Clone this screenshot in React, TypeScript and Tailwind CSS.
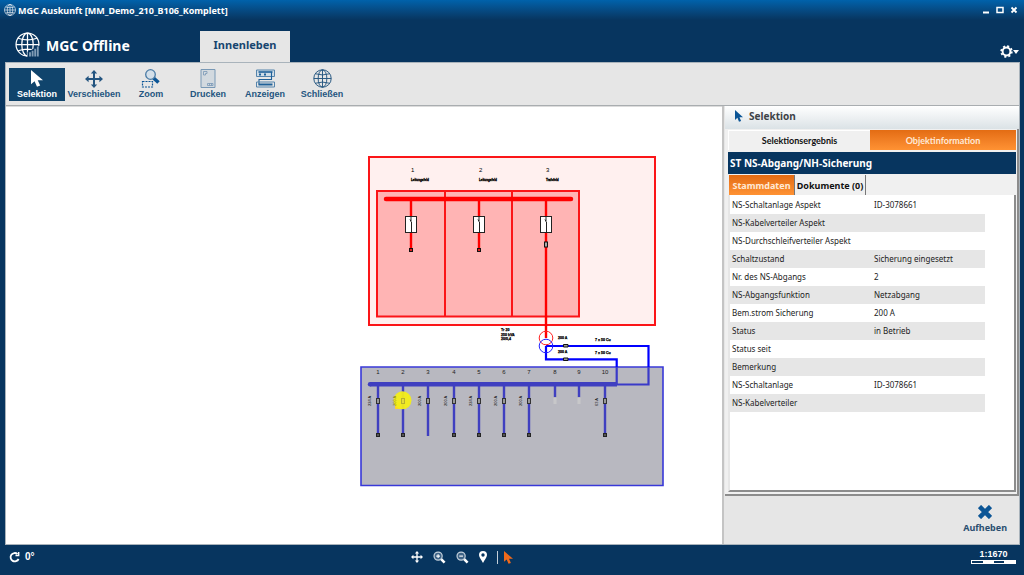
import type { ReactNode } from "react";

const NAVY = "#07355f";
const BLUE = "#0b5596";

function Globe({ size, bars = false }: { size: number; bars?: boolean }) {
  return (
    <svg width={size} height={size} viewBox="0 0 24 24" fill="none" stroke="currentColor" strokeWidth="1.2">
      <circle cx="12" cy="12" r="11" />
      <ellipse cx="12" cy="12" rx="5.5" ry="11" />
      <path d="M12 1v22M1 12h22M3 6q9 3 18 0M3 18q9-3 18 0" />
      {bars && (
        <g stroke="none">
          <path d="M12 24v-5l12-6v11z" fill={NAVY} />
          <path d="M13.500 23.500v-4h1.800v4zM16 23.500v-5.500h1.800v5.500zM18.500 23.500v-7.500h1.800v7.500zM21 23.500v-9.500h1.800v9.500z" fill="#7f9bb5" />
        </g>
      )}
    </svg>
  );
}

function Cursor({ width, height }: { width: number; height: number }) {
  return (
    <svg width={width} height={height} viewBox="0 0 12 18" preserveAspectRatio="none" fill="currentColor">
      <path d="M0 0v15l3.600-3.200L6 17.800l3.200-1.300-2.500-5.700H12z" />
    </svg>
  );
}

function Move({ size }: { size: number }) {
  return (
    <svg width={size} height={size} viewBox="0 0 18 18" fill="currentColor">
      <path d="M9 0l3.200 3.600H10V8h4.400V5.800L18 9l-3.600 3.200V10H10v4.400h2.200L9 18l-3.200-3.600H8V10H3.600v2.200L0 9l3.600-3.200V8H8V3.600H5.800z" />
    </svg>
  );
}

function ZoomSelect() {
  return (
    <svg width="20" height="19" viewBox="0 0 20 19" fill="none">
      <path d="M12.500 9l5 4.500" stroke={BLUE} strokeWidth="3.600" />
      <circle cx="9.500" cy="5.500" r="4.800" fill="#d3dfe9" stroke="#4a7ba5" strokeWidth="1.300" />
      <path d="M1.500 12.500h10v5.500h-10z" stroke={BLUE} strokeWidth="1.200" strokeDasharray="2 1" />
    </svg>
  );
}

function PrintSheet() {
  return (
    <svg width="16" height="19" viewBox="0 0 16 19" fill="none" stroke="#7898b5">
      <path d="M1 .5h14v18H1z" fill="#d2d9df" />
      <path d="M3.500 6V2.500H7v2H5.500V6zM7.500 16.500v-2H13v2zM9.500 14.500v2M11.500 14.500v2" strokeWidth="0.800" />
    </svg>
  );
}

function Displays() {
  return (
    <svg width="19" height="19" viewBox="0 0 19 19" fill="none" stroke="#1f6199">
      <path d="M.5 1h18v6.500H.5z" fill="#cfdce6" stroke="#5584ac" />
      <path d="M2.500 3h14" strokeWidth="1.600" />
      <path d="M3 5.500h2M8 5.500h2" strokeWidth="2" />
      <path d="M15.500 3v7.500H3v5" strokeWidth="1.100" />
      <path d="M.5 13h18v5H.5z" stroke="#5584ac" />
      <path d="M2.500 15.500h14" strokeWidth="2" />
    </svg>
  );
}

function Magnifier({ plus = false }: { plus?: boolean }) {
  return (
    <svg width="13" height="13" viewBox="0 0 14 14" fill="none">
      <path d="M8.500 8.500l4 4" stroke="#fff" strokeWidth="2.800" />
      <circle cx="5.500" cy="5.500" r="4.400" fill="#3f6487" stroke="#c3d0db" strokeWidth="1.300" />
      <path d={plus ? "M3.500 5.500h4M5.500 3.500v4" : "M3.500 5.500h4"} stroke="#fff" strokeWidth="1.200" />
    </svg>
  );
}

const tools: { label: string; icon: ReactNode }[] = [
  { label: "Selektion", icon: <Cursor width={12} height={17} /> },
  { label: "Verschieben", icon: <Move size={18} /> },
  { label: "Zoom", icon: <ZoomSelect /> },
  { label: "Drucken", icon: <PrintSheet /> },
  { label: "Anzeigen", icon: <Displays /> },
  { label: "Schließen", icon: <Globe size={19} /> },
];

const rows = [
  ["NS-Schaltanlage Aspekt", "ID-3078661"],
  ["NS-Kabelverteiler Aspekt", ""],
  ["NS-Durchschleifverteiler Aspekt", ""],
  ["Schaltzustand", "Sicherung eingesetzt"],
  ["Nr. des NS-Abgangs", "2"],
  ["NS-Abgangsfunktion", "Netzabgang"],
  ["Bem.strom Sicherung", "200 A"],
  ["Status", "in Betrieb"],
  ["Status seit", ""],
  ["Bemerkung", ""],
  ["NS-Schaltanlage", "ID-3078661"],
  ["NS-Kabelverteiler", ""],
];

const fields = [
  { x: 411, name: "Leitungsfeld" },
  { x: 479, name: "Leitungsfeld" },
  { x: 546, name: "Trafofeld" },
];

const feeders = [
  { x: 378, fuse: "224 A" },
  { x: 403, fuse: "200 A" },
  { x: 428, fuse: "200 A", open: true },
  { x: 454, fuse: "200 A" },
  { x: 479, fuse: "224 A" },
  { x: 504, fuse: "200 A" },
  { x: 529, fuse: "200 A" },
  { x: 555 },
  { x: 579 },
  { x: 605, fuse: "63 A" },
];

function Diagram() {
  return (
    <svg className="h-full w-full" viewBox="6 107 716 437" fontFamily="Liberation Sans, sans-serif">
      {/* Mittelspannung */}
      <g stroke="#fb1518" strokeWidth="2">
        <path d="M369 157h286v168H369z" fill="#fff0ef" />
        <path d="M377 191h202v125.500H377z" fill="#ffb4b4" />
        <path d="M445 191v125M512 191v125" />
        <path d="M386 199h185" stroke="#f00" strokeWidth="4.500" strokeLinecap="round" />
      </g>
      {fields.map((f, i) => (
        <g key={f.x}>
          <text x={f.x} y="171.500" fontSize="6">{i + 1}</text>
          <text x={f.x} y="181" fontSize="3" fontWeight="700" stroke="#000" strokeWidth="0.300">{f.name}</text>
          <path d={`M${f.x} 199v${i === 2 ? 139 : 51}`} stroke="#f00" strokeWidth="2.400" />
          <rect x={f.x - 5.5} y="216.500" width="11" height="16" fill="#fff" stroke="#222" />
          <path d={`M${f.x} 217v4M${f.x + 0.5} 222v10M${f.x - 1} 219.500l1.500 3`} stroke="#222" />
          {i === 2 ? (
            <rect x={f.x - 1.5} y="242" width="3" height="5" fill="#aaa" stroke="#111" />
          ) : (
            <rect x={f.x - 1.5} y="248.500" width="3" height="3" fill="#d22" stroke="#111" />
          )}
        </g>
      ))}

      {/* Trafo */}
      <g fontSize="3.600" fontWeight="700" stroke="#000" strokeWidth="0.250">
        <text x="501" y="331">Tr 20</text>
        <text x="501" y="335.500">250 kVA</text>
        <text x="501" y="340">20/0,4</text>
        <text x="558" y="339">200 A</text>
        <text x="558" y="352.500">200 A</text>
        <text x="595" y="340.500">7 x 50 Cu</text>
        <text x="595" y="354">7 x 50 Cu</text>
      </g>

      {/* Niederspannung */}
      <path d="M361 367h302v118.500H361z" fill="#b8b8c0" stroke="#3838d8" strokeWidth="1.600" />
      <g fill="none" stroke="#00f" strokeWidth="2.200">
        <path d="M546 346h102.500v21M546 346v13.300h70.700V367" />
        <path d="M648.500 367v17.500H617M616.700 367v17" stroke="#3a3ac8" />
      </g>
      <circle cx="546" cy="338" r="6.800" fill="none" stroke="#f22" />
      <circle cx="546" cy="346" r="6.800" fill="none" stroke="#22f" />
      <path d="M563.500 344.500h4.500v2.500h-4.500zM563.500 358h4.500v2.500h-4.500z" fill="#999" stroke="#111" />
      <path d="M370 384.300h247" stroke="#3f3fc0" strokeWidth="4.500" />
      <circle cx="370" cy="384.300" r="2.200" fill="#3f3fc0" />
      {feeders.map((f, i) => (
        <g key={f.x}>
          <text x={f.x} y="374" fontSize="6" textAnchor="middle" fill="#222">{i + 1}</text>
          <path d={`M${f.x} 384v${f.fuse ? 52 : 13}`} stroke="#3f3fc0" strokeWidth="2.400" />
          {i === 1 && (
            <g>
              <path d="M395 402h6v7h-6z" fill="#fdd32c" />
              <circle cx="402.500" cy="400.300" r="9" fill="#f3ed18" fillOpacity="0.950" />
            </g>
          )}
          {f.fuse ? (
            <g>
              <rect x={f.x - 1.5} y="398.500" width="3" height="5" fill={i === 1 ? "#e5dd3a" : "#999"} stroke={i === 1 ? "#b8b12e" : "#333"} />
              {!f.open && <rect x={f.x - 1.5} y="433.500" width="3" height="3" fill="#555" stroke="#222" />}
              <text transform={`translate(${f.x - 7} 406) rotate(-90)`} fontSize="4" fill={i === 1 ? "#867f20" : "#111"}>{f.fuse}</text>
            </g>
          ) : (
            <rect x={f.x - 1.5} y="398" width="3" height="6" fill="#c7c7c9" />
          )}
        </g>
      ))}
    </svg>
  );
}

export default function App() {
  return (
    <div className="flex h-screen flex-col bg-[#07355f] font-['Noto_Sans',sans-serif] leading-none">
      {/* Titelleiste */}
      <div className="flex h-5 shrink-0 items-center justify-between bg-linear-to-b from-[#0062ab] to-[#07355f] px-1 text-white">
        <div className="flex items-center gap-0.5">
          <Globe size={12} />
          <span className="text-[9px] font-bold">MGC Auskunft [MM_Demo_210_B106_Komplett]</span>
        </div>
        <div className="flex gap-0.5">
          <button aria-label="Minimieren" className="flex size-3 items-center justify-center">
            <svg width="8" height="8" viewBox="0 0 8 8" stroke="currentColor" strokeWidth="2"><path d="M1 6.500h6" /></svg>
          </button>
          <button aria-label="Maximieren" className="flex size-3 items-center justify-center">
            <svg width="8" height="8" viewBox="0 0 8 8" fill="none" stroke="currentColor" strokeWidth="1.500"><path d="M1 1.500h6v5H1z" /></svg>
          </button>
          <button aria-label="Beenden" className="flex size-3 items-center justify-center">
            <svg width="8" height="8" viewBox="0 0 8 8" stroke="currentColor" strokeWidth="1.800"><path d="M1.500 1.500l5 5M6.500 1.500l-5 5" /></svg>
          </button>
        </div>
      </div>

      {/* Kopfbereich */}
      <header className="flex h-[42px] shrink-0 items-end pr-[5px] pl-[15px] text-white">
        <div className="flex h-full w-[185px] items-center gap-1.5 pt-1.5">
          <Globe size={25} bars />
          <h1 className="pt-1 text-[14px] font-bold">MGC Offline</h1>
        </div>
        <button className="h-[31px] w-[90px] bg-[#e6e6e6] pb-1 text-[11px] font-bold text-[#17456f]">Innenleben</button>
        <button aria-label="Einstellungen" className="mb-1 ml-auto flex items-center">
          <svg width="13" height="13" viewBox="0 0 13 13" fill="none" stroke="currentColor">
            <circle cx="6.500" cy="6.500" r="3.900" strokeWidth="2" />
            <circle cx="6.500" cy="6.500" r="5.400" strokeWidth="1.600" strokeDasharray="2.120 2.120" />
          </svg>
          <svg width="6" height="4" viewBox="0 0 6 4" fill="currentColor"><path d="M0 0h6L3 4z" /></svg>
        </button>
      </header>

      <div className="mr-1 ml-[5px] flex min-h-0 flex-1 flex-col border border-[#a9b3bb] bg-[#e6e6e6]">
        {/* Werkzeuge */}
        <nav className="flex h-[42px] shrink-0 items-center gap-px pl-[3px] font-['Liberation_Sans',sans-serif]">
          {tools.map((t, i) => (
            <button
              key={t.label}
              className={
                i === 0
                  ? "flex h-[33px] w-14 flex-col items-center justify-between bg-[#10446c] pt-px pb-0.5 text-white"
                  : "flex h-[33px] w-14 flex-col items-center justify-between pt-px pb-0.5 text-[#245580]"
              }
            >
              <span className="flex h-5 items-center">{t.icon}</span>
              <span className="text-[9px] font-bold">{t.label}</span>
            </button>
          ))}
        </nav>

        <div className="flex min-h-0 flex-1 border-t border-[#a9adb0]">
          <main className="min-w-0 flex-1 border-t border-[#dcdcdc] bg-white">
            <Diagram />
          </main>

          <aside className="flex w-[297px] shrink-0 flex-col border-l-2 border-[#c4c4c4] pl-px">
            <div className="flex h-[23px] shrink-0 items-center gap-1.5 bg-linear-to-b from-white to-[#dbe2e6] pb-1 pl-2.5 text-[#3d4347]">
              <span className="text-[#0b5596]"><Cursor width={8} height={12} /></span>
              <h2 className="text-[10px] font-bold">Selektion</h2>
            </div>

            <div className="flex min-h-0 flex-1 flex-col border-r-2 border-b-2 border-[#8c8c8c] bg-[#f0f0f0] pt-px pr-px pb-0.5 pl-[3px]">
              <div role="tablist" className="flex h-5 shrink-0 font-['Lato',sans-serif] text-[9px] font-bold">
                <button role="tab" className="w-[142px] border-t border-l border-white bg-[#f0f0f0] text-[#111]">Selektionsergebnis</button>
                <button role="tab" aria-selected="true" className="flex-1 bg-linear-to-b from-[#e36c13] to-[#ff9233] text-[#ffe9d6]">Objektinformation</button>
              </div>
              <h3 className="mt-0.5 flex h-[22px] shrink-0 items-center bg-[#07355f] pl-0.5 text-[10px] font-bold text-white">ST NS-Abgang/NH-Sicherung</h3>
              <div role="tablist" className="mt-px ml-px flex h-5 shrink-0 text-[9px] font-bold">
                <button role="tab" aria-selected="true" className="w-[66px] border-r border-[#777] bg-linear-to-b from-[#e36c13] to-[#ff9233] text-[#ffe9d6]">Stammdaten</button>
                <button role="tab" className="w-[71px] border-r border-[#777] text-[#111]">Dokumente (0)</button>
              </div>
              <div className="flex-1 overflow-hidden border-r-2 border-b-2 border-l-2 border-[#8c8c8c] border-l-[#e6e6e6] bg-white pt-px">
                <table className="w-[255px] table-fixed text-left text-[8px] text-[#222]">
                  <tbody>
                    {rows.map(([label, value]) => (
                      <tr key={label} className="h-[18px] even:bg-[#e6e6e6]">
                        <th scope="row" className="w-[142px] p-0 pl-0.5 font-normal">{label}</th>
                        <td className="p-0 pl-0.5">{value}</td>
                      </tr>
                    ))}
                  </tbody>
                </table>
              </div>
            </div>

            <div className="flex h-12 shrink-0 items-center justify-end pr-3 pb-1">
              <button className="flex flex-col items-center gap-1 text-[9px] font-bold text-[#2a4e70]">
                <svg width="14" height="14" viewBox="0 0 14 14" stroke={BLUE} strokeWidth="4.500"><path d="M1.500 1.500l11 11M12.500 1.500l-11 11" /></svg>
                Aufheben
              </button>
            </div>
          </aside>
        </div>
      </div>

      {/* Statusleiste */}
      <footer className="grid h-[30px] shrink-0 grid-cols-[4fr_auto_5fr] items-center px-2 pb-1.5 font-['Liberation_Sans',sans-serif] text-white">
        <button className="flex items-center gap-1 text-[10px] font-bold">
          <svg width="13" height="12" viewBox="0 0 13 12" fill="none" stroke="currentColor" strokeWidth="1.800">
            <path d="M9.500 3A4.200 4.200 0 1 0 10.600 8" />
            <path d="M7.500 4.500h3.200V1" strokeWidth="1.400" />
          </svg>
          0°
        </button>
        <div className="flex items-center gap-2.5">
          <button aria-label="Verschieben"><Move size={12} /></button>
          <button aria-label="Vergrößern"><Magnifier plus /></button>
          <button aria-label="Verkleinern"><Magnifier /></button>
          <button aria-label="Position">
            <svg width="8" height="12" viewBox="0 0 8 12" fill="currentColor"><path fillRule="evenodd" d="M4 0a4 4 0 0 1 4 4c0 2.500-2.500 4.500-4 8C2.500 8.500 0 6.500 0 4a4 4 0 0 1 4-4zm0 2.300a1.700 1.700 0 1 0 0 3.400 1.700 1.700 0 0 0 0-3.400z" /></svg>
          </button>
          <div className="flex items-center border-l border-[#c4cfd9] pl-1.5 text-[#f06a1c]">
            <button aria-label="Selektion"><Cursor width={9} height={13} /></button>
          </div>
        </div>
        <div className="flex flex-col items-center gap-px justify-self-end text-[9px] font-bold">
          <span>1:1670</span>
          <div className="flex h-1 w-[45px] border border-white">
            <div className="flex-1" />
            <div className="flex-1 bg-white" />
            <div className="flex-1" />
            <div className="flex-1 bg-white" />
          </div>
        </div>
      </footer>
    </div>
  );
}
